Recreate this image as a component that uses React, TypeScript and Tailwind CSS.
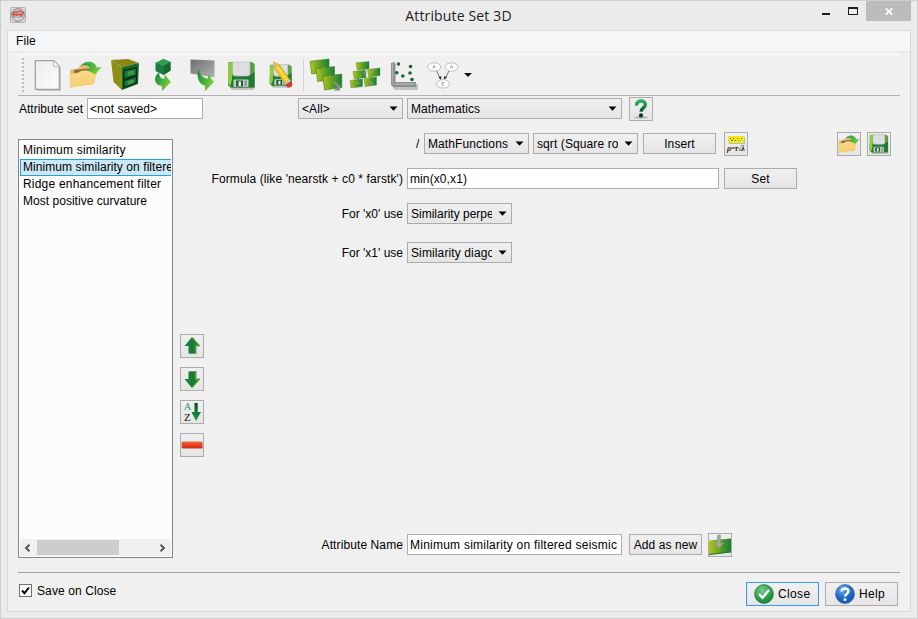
import type { ReactNode } from "react";

function Gradients() {
  return (
    <svg className="absolute h-0 w-0" aria-hidden="true">
      <defs>
        <linearGradient id="leaf" x1="0" y1="0" x2="1" y2="0">
          <stop offset="0" stopColor="#b4c61c" />
          <stop offset=".5" stopColor="#5fa022" />
          <stop offset="1" stopColor="#15803c" />
        </linearGradient>
        <linearGradient id="arrowGreen" x1="0" y1="0" x2="1" y2="0.4">
          <stop offset="0" stopColor="#138a3c" />
          <stop offset=".5" stopColor="#3fae3c" />
          <stop offset="1" stopColor="#7fcb3a" />
        </linearGradient>
        <linearGradient id="folder" x1="0" y1="0" x2="0.3" y2="1">
          <stop offset="0" stopColor="#f9dc90" />
          <stop offset="1" stopColor="#f6cf72" />
        </linearGradient>
        <linearGradient id="paper" x1="0" y1="0" x2="1" y2="1">
          <stop offset="0" stopColor="#ececee" />
          <stop offset="1" stopColor="#fdfdfd" />
        </linearGradient>
        <linearGradient id="slab" x1="0" y1="0" x2="1" y2="1">
          <stop offset="0" stopColor="#6e6e6e" />
          <stop offset="1" stopColor="#b2b2b2" />
        </linearGradient>
        <linearGradient id="disk" x1="0" y1="0" x2="1" y2="0">
          <stop offset="0" stopColor="#7cc43a" />
          <stop offset=".25" stopColor="#2f8a35" />
          <stop offset="1" stopColor="#5aa33a" />
        </linearGradient>
        <linearGradient id="question" x1="0" y1="0" x2="0" y2="1">
          <stop offset="0" stopColor="#23b354" />
          <stop offset=".5" stopColor="#128a40" />
          <stop offset="1" stopColor="#0a4a26" />
        </linearGradient>
        <linearGradient id="redBar" x1="0" y1="0" x2="0" y2="1">
          <stop offset="0" stopColor="#f47a55" />
          <stop offset=".4" stopColor="#ee4424" />
          <stop offset="1" stopColor="#d92c10" />
        </linearGradient>
        <linearGradient id="sortArrow" x1="0" y1="0" x2="0" y2="1">
          <stop offset="0" stopColor="#0b4a20" />
          <stop offset="1" stopColor="#1ea04a" />
        </linearGradient>
        <radialGradient id="okBall" cx=".4" cy=".3" r=".8">
          <stop offset="0" stopColor="#7cc98c" />
          <stop offset=".6" stopColor="#2b9a4a" />
          <stop offset="1" stopColor="#167a34" />
        </radialGradient>
        <radialGradient id="helpBall" cx=".4" cy=".25" r=".85">
          <stop offset="0" stopColor="#6fb0ea" />
          <stop offset=".55" stopColor="#1f69c6" />
          <stop offset="1" stopColor="#1450a8" />
        </radialGradient>
      </defs>
    </svg>
  );
}

function AppIcon() {
  return (
    <svg width="16" height="16" viewBox="0 0 16 16">
      <rect x=".5" y=".5" width="15" height="15" rx="1" fill="#d6d6d6" stroke="#b2b2b2" />
      <circle cx="8" cy="8" r="6.500" fill="#bdbdbd" stroke="#959595" />
      <path d="M2 7.500l2.500-2.500h3L10 4l2 1.500 2 .5M3 7.500h10M4 7v3M7.500 7L6.500 9M11 7v3" stroke="#dc4842" strokeWidth="1.300" fill="none" />
      <path d="M3.500 12h9" stroke="#e2e2e2" />
    </svg>
  );
}

function NewIcon() {
  return (
    <svg width="30" height="34" viewBox="0 0 30 34">
      <path d="M4 4h19l5 5.500V33H4z" fill="#8a8a8a" opacity=".4" />
      <path d="M2.300 2.700h18.400l5.600 6v22.600h-24z" fill="url(#paper)" stroke="#a2a2a2" strokeWidth="1.300" />
      <path d="M20.500 2.700v6h6z" fill="#fff" stroke="#aaa" strokeWidth=".8" />
    </svg>
  );
}

function FolderIcon({ size = 33 }: { size?: number }) {
  return (
    <svg width={size} height={size * 0.84} viewBox="0 0 33 28">
      <path d="M1 9l9-2 1-3 9-1 1 4 6 2-2 14-23 3z" fill="#e5b765" />
      <path d="M5 9l20-2-2 6-18 2z" fill="#5f4f34" opacity=".75" />
      <path d="M1 13l8-1 3-2 16-1-3 14-24 3.500z" fill="url(#folder)" stroke="#ecc36b" strokeWidth=".5" />
      <path d="M12 5C15-.5 25-1 28 6.500l4.500-.5-6 7.500L17 9l4.500-1C20 4 16 3 12 5z" fill="url(#arrowGreen)" />
      <path d="M13.500 3.500C17 .8 23 1 26 6.500" stroke="#55c77d" fill="none" strokeWidth=".9" />
    </svg>
  );
}

function CabinetIcon() {
  return (
    <svg width="30" height="34" viewBox="0 0 30 34">
      <path d="M1 2l17-1 11 4-17 4z" fill="#8f8513" />
      <path d="M1 2l11 7v23L3.500 24z" fill="#8a8f16" />
      <path d="M12 9l17-4-1 21-16 6z" fill="#1a6a30" />
      <path d="M14 12.500l12.500-3v7.500l-12.500 4zM14 22.500l12.500-4v6l-12.500 5z" fill="#167a38" stroke="#082d16" strokeWidth="1.300" />
      <path d="M18 14.500l5-1v2l-5 1.200M18 24l5-1.500v2l-5 1.500" stroke="#7fae70" fill="none" strokeWidth=".9" />
    </svg>
  );
}

function CubeIcon() {
  return (
    <svg width="20" height="34" viewBox="0 0 20 34">
      <path d="M2.500 5l8-4 7 3v8.500l-7 4.500-8-4z" fill="#1b7d3f" />
      <path d="M2.500 5l8-4 7 3-7 4z" fill="#2f9d54" />
      <path d="M10.500 8l7-4v8.500l-7 4.500z" fill="#146a33" />
      <path d="M6.500 14C0 18 .5 27 9 28v5l9-9-6.500-7.500v4.500C8 21 5.500 18 6.500 14z" fill="url(#arrowGreen)" />
    </svg>
  );
}

function SlabIcon() {
  return (
    <svg width="26" height="34" viewBox="0 0 26 34">
      <path d="M.5 1.500l24 1v17L.5 15.500z" fill="url(#slab)" />
      <path d="M9 10C6 18 8 26 15 27.500V33l9-9-6-8v4.500C12 20 9 16 9 10z" fill="url(#arrowGreen)" />
    </svg>
  );
}

function DiskShape() {
  return (
    <>
      <path d="M3 3h25v24l-2 2H5l-2-2z" fill="#777" opacity=".4" />
      <path d="M1 2q0-1 1-1h23l2.500 2v23.500H4L1 24z" fill="url(#disk)" />
      <path d="M1 14l5 1 2 1 14-1 5.500-4v15.500H4L1 24z" fill="#1f7a33" />
      <path d="M1 2v21l2.500 2 1.500-7V1.500z" fill="#8dcc3f" />
      <path d="M5.500 1h17.500v11q0 3-3 3H8.500q-3 0-3-3z" fill="#dcdfe1" stroke="#b4b9bc" strokeWidth=".6" />
      <rect x="6.500" y="18.500" width="15" height="7.500" rx="1" fill="#c3cdc8" />
      <rect x="9" y="19.500" width="7" height="6" fill="#1b5c33" />
      <rect x="11.500" y="20.500" width="2.500" height="4.500" fill="#eee" />
      <rect x="17.500" y="19.500" width="2.500" height="6" fill="#8f9b95" />
    </>
  );
}

function DiskIcon({ size = 29 }: { size?: number }) {
  return (
    <svg width={size} height={size} viewBox="0 0 29 29">
      <DiskShape />
    </svg>
  );
}

function DiskEditIcon() {
  return (
    <svg width="26" height="28" viewBox="0 0 26 28">
      <g transform="translate(1 3) scale(.82)"><DiskShape /></g>
      <path d="M5.500 1l5.500 2.500L21.500 18l-5 4L7 8z" fill="#f3c61b" stroke="#c08f10" strokeWidth=".6" />
      <path d="M8.500 4.500l10.500 15" stroke="#fbe45f" strokeWidth="1.500" />
      <path d="M5.500 1l5.500 2.500L7 7z" fill="#e9b46a" />
      <path d="M16.500 22l5-4 1.500 2-5 4z" fill="#c8cdd0" />
      <path d="M17.500 23.500l5-3q2.800 2 1.300 4.700-3 2.300-5 .8z" fill="#df3a26" />
    </svg>
  );
}

function Tile({ x, y, w, h }: { x: number; y: number; w: number; h: number }) {
  return (
    <path
      transform={`translate(${x} ${y}) scale(${w / 17} ${h / 13})`}
      d="M0 2L17 0v11L1.500 13z"
      fill="url(#leaf)"
      stroke="#3b7a25"
      strokeWidth=".5"
    />
  );
}

function TilesIcon() {
  return (
    <svg width="34" height="34" viewBox="0 0 34 34">
      <Tile x={1} y={1} w={19} h={15} />
      <path d="M14 9l4 4" stroke="#999" strokeWidth="1.800" />
      <Tile x={7} y={8.5} w={18.5} h={15} />
      <path d="M20 17l4 3" stroke="#999" strokeWidth="1.800" />
      <Tile x={13.8} y={16} w={19} h={16} />
      <path d="M25 24l5 5" stroke="#8f8f8f" strokeWidth="2" />
      <path d="M31 26v6.500h-6z" fill="#8c8c8c" />
    </svg>
  );
}

function ClusterIcon() {
  return (
    <svg width="32" height="28" viewBox="0 0 32 28">
      <path d="M15 7v5M11 15l-3 5M23 14l-3 5" stroke="#a3a3a3" strokeWidth="1.500" />
      <Tile x={7} y={0.5} w={13} h={8.5} />
      <Tile x={4} y={9} w={13} h={9} />
      <Tile x={18.5} y={7} w={12.5} h={9} />
      <Tile x={1} y={18} w={12.5} h={9} />
      <Tile x={15} y={16} w={12.5} h={9.5} />
      <path d="M16 9v6M12 14l-2 2M22 11l3-2M7 21l3 2M20 20l4 3" stroke="#9c9c8c" strokeWidth="1.200" />
    </svg>
  );
}

function PlotIcon() {
  return (
    <svg width="28" height="29" viewBox="0 0 28 29">
      <path d="M3 3h3v20h22v6H5l-2-2z" fill="#888" opacity=".45" />
      <path d="M1 2l4-1v20h21v5H3l-2-2z" fill="#909090" />
      <path d="M2.500 3v19.500M4 23h21" stroke="#b0b0b0" strokeWidth="1.300" />
      <g fill="#176a35">
        <circle cx="8.500" cy="3" r="1.800" /><circle cx="20.500" cy="5.500" r="1.800" />
        <circle cx="6.800" cy="11.700" r="1.800" /><circle cx="12.800" cy="15" r="1.800" />
        <circle cx="20" cy="12" r="1.800" /><circle cx="22" cy="18.500" r="1.800" />
      </g>
    </svg>
  );
}

function GraphIcon() {
  return (
    <svg width="32" height="28" viewBox="0 0 32 28">
      <path d="M9.500 9.500l3.500 8M22 9.500l-3.500 8" stroke="#777" />
      <path d="M11.500 16l2.500 3 .3-3.800zM19.800 16l-2.500 3-.3-3.800z" fill="#222" />
      <g fill="#fff" stroke="#b5b5b5" strokeWidth=".9">
        <ellipse cx="7.200" cy="6" rx="6.500" ry="4.200" /><ellipse cx="24.500" cy="6" rx="6.500" ry="4.200" /><ellipse cx="16" cy="22.800" rx="6.500" ry="4.200" />
      </g>
      <path d="M6 7.500l1.200-3 1.200 3M23.300 7.500l1.200-3 1.200 3M17.200 21.500h-2v2.600h2" stroke="#888" strokeWidth=".8" fill="none" />
    </svg>
  );
}

function QuestionIcon() {
  return (
    <svg width="20" height="22" viewBox="0 0 20 22">
      <ellipse cx="10" cy="19.500" rx="7" ry=".9" fill="#888" opacity=".6" />
      <path d="M5.700 7.500C5 1.800 14.300 1.500 14.300 6.400c0 3.400-4 3.400-4.200 7.300" stroke="url(#question)" strokeWidth="3.400" fill="none" />
      <circle cx="10" cy="17.400" r="2.100" fill="#0a3a1e" />
    </svg>
  );
}

function BigArrow({ down = false }: { down?: boolean }) {
  return (
    <svg width="22" height="22" viewBox="0 0 22 22">
      <g transform={down ? "translate(0 22) scale(1 -1)" : undefined}>
        <path d="M12 4l7.500 8H16v7H9z" fill="#666" opacity=".4" />
        <path d="M11 2l8 9h-4v7.500H7.500V11H3.500z" fill="#14803a" />
        <path d="M11.500 2.800l6.500 7.600h-3.600v8" stroke="#5f9b24" strokeWidth="1.100" fill="none" />
      </g>
    </svg>
  );
}

function SortIcon() {
  return (
    <svg width="22" height="22" viewBox="0 0 22 22">
      <text x="3" y="9" fontFamily="Liberation Serif, serif" fontSize="10" letterSpacing="0" fill="#2a9a54">A</text>
      <text x="3" y="19.500" fontFamily="Liberation Serif, serif" fontSize="11" letterSpacing="0" fill="#111">Z</text>
      <path d="M13.500 2h3.200v9h3.300L15 20l-4.500-9h3z" fill="url(#sortArrow)" />
    </svg>
  );
}

function RemoveIcon() {
  return (
    <svg width="22" height="22" viewBox="0 0 22 22">
      <rect x="2" y="9" width="20" height="6" fill="#777" opacity=".35" />
      <rect x="1" y="8" width="20" height="6" rx=".5" fill="url(#redBar)" stroke="#cf3516" strokeWidth=".6" />
    </svg>
  );
}

function FormulaIcon() {
  return (
    <svg width="20" height="20" viewBox="0 0 20 20">
      <rect x="3" y="3" width="16" height="7" fill="#888" opacity=".5" />
      <rect x="2" y="2" width="16" height="7" fill="#f1e71c" />
      <path d="M4 4.500h1M7 4.500h1M11 4.500h1M15 4.500h1M5 6.500h2M9 6.500h1M12.500 6.500h1" stroke="#6b660a" />
      <text x="1" y="17" textLength="18" fontFamily="Liberation Serif, serif" fontSize="8" fontStyle="italic" fontWeight="bold" fill="#222">ρ=τ√λ</text>
    </svg>
  );
}

function StoreIcon() {
  return (
    <svg width="22" height="22" viewBox="0 0 22 22">
      <path d="M0 6.500L22 4.500v13.500L0 21z" fill="url(#leaf)" />
      <path d="M0 20.500L22 18" stroke="#2a6d27" />
      <path d="M8.500 1h3v8h3L10 14 5.500 9h3z" fill="#a5a5a5" stroke="#8d9488" strokeWidth=".5" />
    </svg>
  );
}

function OkIcon() {
  return (
    <svg width="20" height="20" viewBox="0 0 20 20">
      <circle cx="10" cy="10" r="9.400" fill="url(#okBall)" stroke="#2b8145" strokeWidth=".8" />
      <path d="M5 10l3.500 3.800L15 6" stroke="#fff" strokeWidth="2.400" fill="none" />
    </svg>
  );
}

function HelpIcon() {
  return (
    <svg width="20" height="20" viewBox="0 0 20 20">
      <circle cx="10" cy="10" r="9.400" fill="url(#helpBall)" stroke="#2763ac" strokeWidth=".8" />
      <path d="M6.500 7.600C6.500 3.400 13.600 3.700 13.500 7.300c0 2.600-3.300 2.500-3.400 5.200" stroke="#fff" strokeWidth="2.400" fill="none" />
      <circle cx="10" cy="15.600" r="1.500" fill="#fff" />
    </svg>
  );
}

const face = "border border-[#acacac] bg-linear-to-b from-[#f0f0f0] to-[#e5e5e5]";

function Combo({ width, children }: { width: string; children: ReactNode }) {
  return (
    <div className={`flex h-[21px] shrink-0 items-center pl-[3px] ${face} ${width}`}>
      <span className="min-w-0 flex-1 overflow-hidden whitespace-nowrap pt-px">{children}</span>
      <svg className="ml-[6px] mr-[4px] shrink-0" width="9" height="5" viewBox="0 0 9 5">
        <path d="M.5 .5h8L4.500 4.800z" fill="#000" />
      </svg>
    </div>
  );
}

function Field({ width, children }: { width: string; children: ReactNode }) {
  return (
    <div className={`flex h-[21px] shrink-0 items-center overflow-hidden whitespace-nowrap border border-[#abadb3] bg-white pl-[2px] pt-px ${width}`}>
      {children}
    </div>
  );
}

function Push({ children }: { children: ReactNode }) {
  return <button className={`h-[21px] w-[73px] shrink-0 whitespace-nowrap pt-px text-center ${face}`}>{children}</button>;
}

function IconButton({ className = "", children }: { className?: string; children: ReactNode }) {
  return <button className={`flex h-6 w-6 shrink-0 items-center justify-center overflow-hidden ${face} ${className}`}>{children}</button>;
}

function Label({ children }: { children: ReactNode }) {
  return <span className="mr-1 w-[198px] shrink-0 whitespace-nowrap pt-px text-right">{children}</span>;
}

function TitleBar() {
  return (
    <header className="flex h-[29px] shrink-0">
      <div className="w-[200px] pl-[9px] pt-[6px]"><AppIcon /></div>
      <h1 className="flex-1 pt-[5px] text-center font-['Open_Sans',sans-serif] text-[14px] leading-[20px] tracking-[0.15px] text-[#222]">Attribute Set 3D</h1>
      <div className="flex w-[201px] justify-end">
        <div className="mr-[18px] mt-[12px] h-[2px] w-2 bg-[#1d1d1d]" />
        <div className="mr-[8px] mt-[6px] h-[8px] w-[10px] border border-t-2 border-[#1d1d1d]" />
        <div className="mr-[6px] flex h-5 w-[45px] items-center justify-center bg-[#bcbcbc]">
          <svg width="8" height="7" viewBox="0 0 8 7"><path d="M.8.3l6.400 6.400M7.200.3L.8 6.700" stroke="#fff" strokeWidth="1.700" /></svg>
        </div>
      </div>
    </header>
  );
}

function ToolBar() {
  return (
    <div className="mx-[10px] mt-[2px] flex h-[42px] shrink-0 items-center border-b border-t border-b-[#b2b2b2] border-t-white">
      <div className="ml-1 h-[34px] w-[2px] bg-[repeating-linear-gradient(to_bottom,#bdbdbd_0_2px,transparent_2px_4px)]" />
      <div className="ml-[9px] w-9"><NewIcon /></div>
      <div className="w-[41px]"><FolderIcon /></div>
      <div className="w-[43px]"><CabinetIcon /></div>
      <div className="w-[37px]"><CubeIcon /></div>
      <div className="w-[37px]"><SlabIcon /></div>
      <div className="w-[41px]"><DiskIcon /></div>
      <div className="w-[35px]"><DiskEditIcon /></div>
      <div className="h-8 w-px bg-[#d0d0d0]" />
      <div className="ml-[5px] w-[40px]"><TilesIcon /></div>
      <div className="w-[41px]"><ClusterIcon /></div>
      <div className="w-[37px]"><PlotIcon /></div>
      <div className="w-[37px]"><GraphIcon /></div>
      <svg width="8" height="4" viewBox="0 0 8 4"><path d="M0 0h8L4 4z" fill="#111" /></svg>
    </div>
  );
}

const attributes = [
  { name: "Minimum similarity", selected: false, tracking: "tracking-[0.22px]" },
  { name: "Minimum similarity on filtered seismic", selected: true, tracking: "tracking-[0.07px]" },
  { name: "Ridge enhancement filter", selected: false, tracking: "tracking-[0.2px]" },
  { name: "Most positive curvature", selected: false, tracking: "tracking-[0.03px]" },
];

function AttributeList() {
  return (
    <div className="mt-[18px] flex h-[419px] w-[155px] shrink-0 flex-col border border-[#828790] bg-[#fcfcfc] p-px">
      <ul className="flex-1 pt-px">
        {attributes.map((a) => (
          <li
            key={a.name}
            className={`h-[17px] overflow-hidden whitespace-nowrap border pl-[2px] leading-[15px] ${a.tracking} ${a.selected ? "border-r-0 border-[#26a0da] bg-[#cbe8f6]" : "border-transparent"}`}
          >
            {a.name}
          </li>
        ))}
      </ul>
      <div className="flex h-[17px] items-center bg-[#f0f0f0]">
        <svg className="ml-[4px]" width="7" height="8" viewBox="0 0 7 8"><path d="M5.500.7L2 4l3.500 3.300" stroke="#555" strokeWidth="2" fill="none" /></svg>
        <div className="ml-[6px] h-[15px] w-[82px] bg-[#cdcdcd]" />
        <svg className="ml-[40px]" width="7" height="8" viewBox="0 0 7 8"><path d="M1.500.7L5 4 1.500 7.300" stroke="#555" strokeWidth="2" fill="none" /></svg>
      </div>
    </div>
  );
}

function FormulaForm() {
  return (
    <div className="flex h-[437px] flex-1 flex-col pt-[11px]">
      <div className="flex h-6 items-center">
        <span className="ml-[211px] w-2">/</span>
        <div className="-mt-px flex"><Combo width="w-[105px]">MathFunctions</Combo></div>
        <div className="-mt-px ml-1 flex"><Combo width="w-[105px]">sqrt (Square root)</Combo></div>
        <div className="-mt-px ml-[5px] flex"><Push>Insert</Push></div>
        <IconButton className="ml-2"><FormulaIcon /></IconButton>
        <IconButton className="ml-[89px]"><FolderIcon size={22} /></IconButton>
        <IconButton className="ml-[6px]"><DiskIcon size={20} /></IconButton>
      </div>
      <div className="mt-3 flex items-center">
        <Label>Formula (like 'nearstk + c0 * farstk')</Label>
        <Field width="w-[312px]">min(x0,x1)</Field>
        <div className="ml-[5px] flex"><Push>Set</Push></div>
      </div>
      <div className="mt-[14px] flex items-center tracking-normal">
        <Label>For 'x0' use</Label>
        <Combo width="w-[105px]">Similarity perpendicular</Combo>
      </div>
      <div className="mt-[18px] flex items-center tracking-normal">
        <Label>For 'x1' use</Label>
        <Combo width="w-[105px]"><span className="tracking-[0.12px]">Similarity diagonal</span></Combo>
      </div>
      <div className="mb-px mt-auto flex items-center">
        <Label>Attribute Name</Label>
        <div className="-mt-px flex"><Field width="w-[215px]"><span className="tracking-[0.24px]">Minimum similarity on filtered seismic</span></Field></div>
        <div className="-mt-px ml-[7px] flex"><Push>Add as new</Push></div>
        <IconButton className="ml-[6px]"><StoreIcon /></IconButton>
      </div>
    </div>
  );
}

export default function App() {
  return (
    <div className="flex h-[619px] w-[918px] flex-col overflow-hidden border border-[#cfcfcf] bg-[#ebebeb] font-['Liberation_Sans',Arial,sans-serif] text-[12px] leading-[15px] tracking-[0.1px] text-black">
      <Gradients />
      <TitleBar />
      <main className="mx-[6px] flex h-[582px] flex-col border border-[#d9d9d9] bg-[#f0f0f0]">
        <nav className="h-[21px] shrink-0 border-b border-[#e8e8e8] bg-[#f5f6f7] pl-2 pt-[3px]">File</nav>
        <ToolBar />
        <div className="flex h-[25px] shrink-0 items-center pl-[10px]">
          <span className="w-[69px] shrink-0 whitespace-nowrap pl-px pt-px tracking-normal">Attribute set</span>
          <Field width="w-[116px]">&lt;not saved&gt;</Field>
          <div className="ml-[95px] flex"><Combo width="w-[105px]">&lt;All&gt;</Combo></div>
          <div className="ml-1 flex"><Combo width="w-[215px]">Mathematics</Combo></div>
          <IconButton className="ml-[7px]"><QuestionIcon /></IconButton>
        </div>
        <div className="flex h-[437px] shrink-0 pl-[10px]">
          <AttributeList />
          <div className="ml-[7px] flex w-[25px] shrink-0 flex-col gap-[9px] pt-[213px]">
            <IconButton><BigArrow /></IconButton>
            <IconButton><BigArrow down /></IconButton>
            <IconButton><SortIcon /></IconButton>
            <IconButton><RemoveIcon /></IconButton>
          </div>
          <FormulaForm />
        </div>
        <footer className="mx-[10px] mt-[14px] flex h-[38px] shrink-0 border-t border-[#a0a0a0]">
          <label className="ml-px mt-[10px] flex h-[15px] items-center gap-[5px]">
            <span className="flex h-[13px] w-[13px] items-center justify-center border border-[#707070] bg-white">
              <svg width="9" height="9" viewBox="0 0 9 9"><path d="M1 4.500l2.500 2.700L8 1.500" stroke="#000" strokeWidth="2" fill="none" /></svg>
            </span>
            <span className="pt-px">Save on Close</span>
          </label>
          <div className="ml-auto mr-[2px] mt-[9px] flex gap-[6px]">
            <button className="flex h-6 w-[73px] items-center gap-1 border border-[#3399ff] bg-linear-to-b from-[#f0f0f0] to-[#e5e5e5] pl-[7px] tracking-[0.35px]"><OkIcon />Close</button>
            <button className={`flex h-6 w-[73px] items-center gap-1 pl-[9px] tracking-[0.35px] ${face}`}><HelpIcon />Help</button>
          </div>
        </footer>
      </main>
    </div>
  );
}
